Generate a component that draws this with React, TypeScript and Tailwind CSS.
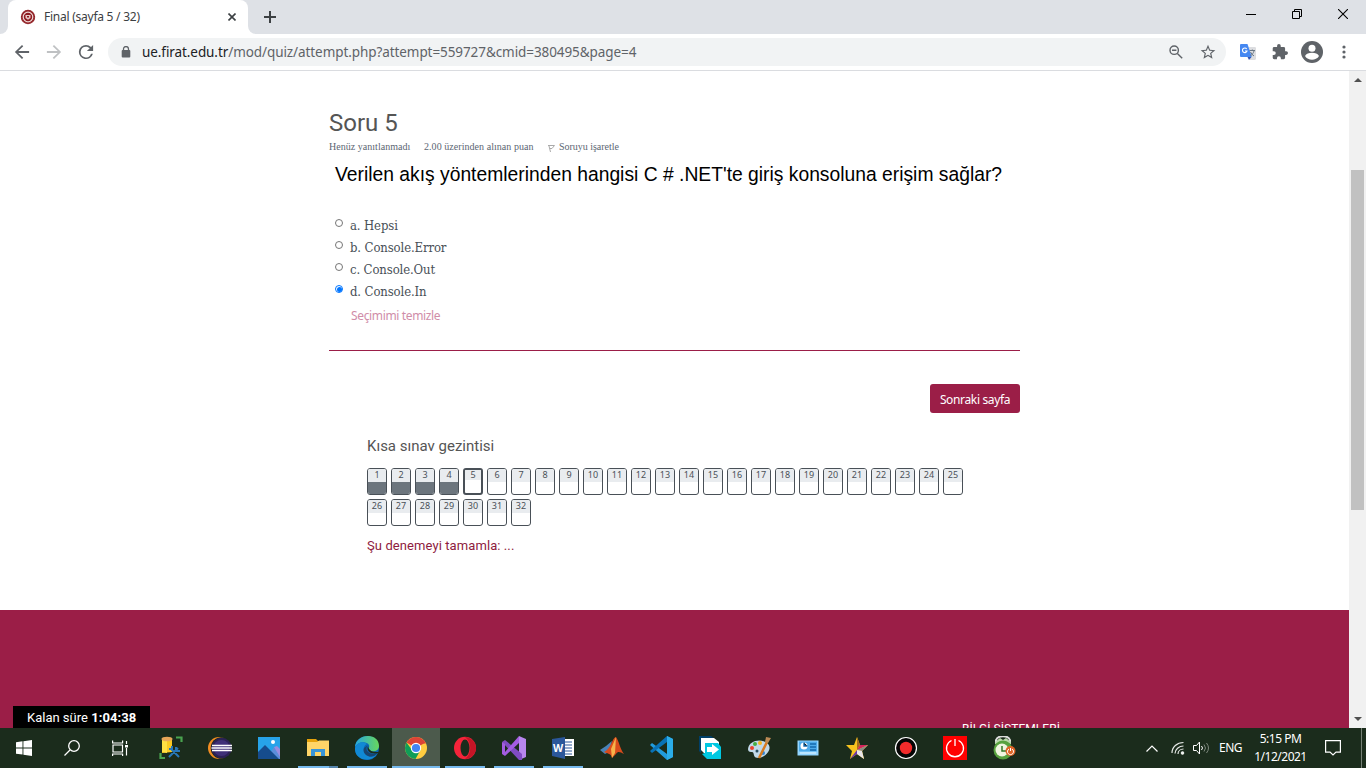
import React from "react";

const options = ["a. Hepsi", "b. Console.Error", "c. Console.Out", "d. Console.In"];

function TabStrip() {
  return (
    <div className="flex h-[34px] items-start bg-[#dee1e6] text-[#3c4043]">
      <div className="flex h-[34px] w-2 items-end bg-white">
        <div className="h-full w-full rounded-br-lg bg-[#dee1e6]" />
      </div>
      <div className="flex h-[34px] w-[240px] items-center rounded-t-lg bg-white pl-3">
        <svg width="16" height="16" viewBox="0 0 16 16">
          <circle cx="8" cy="8" r="7.2" fill="#8e1b20" />
          <circle cx="8" cy="8" r="4.8" fill="none" stroke="#eed9d8" strokeWidth="1.2" />
          <circle cx="8" cy="8" r="6.2" fill="none" stroke="#b76462" strokeWidth=".6" strokeDasharray="1 1" />
          <path d="M5.500 6h5v3L8 10.800 5.500 9z" fill="#e6c6c4" />
          <path d="M7 7h2v1.5H7z" fill="#8e1b20" />
        </svg>
        <span className="ml-2 w-[175px] whitespace-nowrap text-[12px] leading-4 tracking-[-0.25px]">Final (sayfa 5 / 32)</span>
        <svg className="ml-[9px]" width="8" height="8" viewBox="0 0 8 8" fill="none" stroke="#3c4043" strokeWidth="1.6">
          <path d="M.5.5l7 7M7.5.5l-7 7" />
        </svg>
      </div>
      <div className="h-[34px] w-2 bg-white">
        <div className="h-full w-full rounded-bl-lg bg-[#dee1e6]" />
      </div>
      <svg className="ml-2 mt-[11px]" width="12" height="12" viewBox="0 0 12 12" stroke="#3c4043" strokeWidth="2">
        <path d="M6 0v12M0 6h12" />
      </svg>
      <div className="ml-auto flex h-[34px] items-start pr-[18px] pt-[9px]">
        <svg className="mr-9" width="10" height="10" viewBox="0 0 10 10" stroke="#000"><path d="M0 5.5h10" /></svg>
        <svg className="mr-9" width="10" height="10" viewBox="0 0 10 10" fill="none" stroke="#000">
          <path d="M.5 2.5h7v7h-7zM2.5 2.5v-2h7v7h-2" />
        </svg>
        <svg width="10" height="10" viewBox="0 0 10 10" stroke="#000" strokeWidth="1.1"><path d="M0 0l10 10M10 0L0 10" /></svg>
      </div>
    </div>
  );
}

function Toolbar() {
  return (
    <div className="flex h-[37px] items-center border-b border-[#dadce0] bg-white pl-[14px]">
      <svg width="16" height="16" viewBox="3 3 18 18" fill="#5f6368"><path d="M20 11H7.83l5.59-5.59L12 4l-8 8 8 8 1.41-1.41L7.83 13H20v-2z" /></svg>
      <svg className="ml-4" width="16" height="16" viewBox="3 3 18 18" fill="#bfc1c3"><path d="M12 4l-1.41 1.41L16.17 11H4v2h12.17l-5.58 5.59L12 20l8-8z" /></svg>
      <svg className="ml-4" width="16" height="16" viewBox="3 3 18 18" fill="#5f6368">
        <path d="M17.65 6.35A7.96 7.96 0 0 0 12 4a8 8 0 1 0 7.73 10h-2.08A6 6 0 1 1 12 6c1.66 0 3.14.69 4.22 1.78L13 11h7V4z" />
      </svg>
      <div className="ml-[14px] flex h-7 w-[1118px] items-center rounded-full bg-[#f1f3f4] pl-[13px]">
        <svg width="10" height="12" viewBox="0 0 10 12"><rect x=".7" y="4" width="8.6" height="7.6" rx="1" fill="#5f6368" /><path d="M2.5 5V3a2.5 2.5 0 0 1 5 0v2" fill="none" stroke="#5f6368" strokeWidth="1.3" /></svg>
        <span className="ml-[11px] w-[1025px] whitespace-nowrap text-[13.5px] leading-5 tracking-[-0.08px] text-[#5f6368]">
          <span className="text-[#202124]">ue.firat.edu.tr</span>/mod/quiz/attempt.php?attempt=559727&amp;cmid=380495&amp;page=4
        </span>
        <svg className="ml-[2px]" width="14" height="14" viewBox="0 0 14 14" fill="none" stroke="#5f6368" strokeWidth="1.4">
          <circle cx="5.2" cy="5.2" r="4.2" /><path d="M8.4 8.4l4.8 4.8M3 5.2h4.4" />
        </svg>
        <svg className="ml-[17px]" width="16" height="16" viewBox="0 0 24 24" fill="#5f6368"><path d="M23 9.200l-7.900-.7L12 1.200 8.900 8.500 1 9.200l6 5.200-1.800 7.700 6.800-4.100 6.800 4.100-1.800-7.700zM12 16l-4.200 2.500 1.100-4.700-3.700-3.200 4.900-.4L12 5.700l1.900 4.500 4.900.4-3.700 3.200 1.100 4.700z" /></svg>
      </div>
      <svg className="ml-[14px]" width="16" height="16" viewBox="0 0 16 16">
        <path d="M7 3h8.300l.7.7V15l-1 1H10z" fill="#dcdde0" /><path d="M7.500 13h4L9 16z" fill="#3456b4" />
        <path d="M1 0h6.500l4.300 13H1a1 1 0 0 1-1-1V1a1 1 0 0 1 1-1z" fill="#4688f1" />
        <path d="M6.700 5A2.300 2.300 0 1 0 7 7H5" fill="none" stroke="#fff" strokeWidth="1.100" />
        <path d="M9.500 6.500h5.500M12.300 5.500v1M14 7c-.5 2-2 3.500-3.500 5M10.500 8c.7 1.700 2 3 3.500 4" fill="none" stroke="#687786" />
      </svg>
      <svg className="ml-4" width="16" height="16" viewBox="1 1 22 22" fill="#5f6368"><path d="M20.500 11H19V7a2 2 0 0 0-2-2h-4V3.500a2.500 2.500 0 0 0-5 0V5H4a2 2 0 0 0-2 2v3.800h1.500a2.700 2.700 0 0 1 0 5.400H2V20a2 2 0 0 0 2 2h3.800v-1.500a2.700 2.700 0 0 1 5.400 0V22H17a2 2 0 0 0 2-2v-4h1.500a2.500 2.500 0 0 0 0-5z" /></svg>
      <svg className="ml-[13px]" width="22" height="22" viewBox="0 0 22 22"><circle cx="11" cy="11" r="11" fill="#5f6368" /><circle cx="11" cy="7.200" r="3.500" fill="#fff" /><path d="M4 15c2-4.200 12-4.200 14 0-3 5-11 5-14 0z" fill="#fff" /></svg>
      <svg className="ml-[19px]" width="4" height="14" viewBox="0 0 4 14" fill="#5f6368"><circle cx="2" cy="2" r="1.600" /><circle cx="2" cy="7" r="1.600" /><circle cx="2" cy="12" r="1.600" /></svg>
    </div>
  );
}

function QuizButton({ n }: { n: number }) {
  const current = n === 5;
  const answered = n < 5;
  return (
    <div className={`flex h-[27px] w-5 flex-col overflow-hidden rounded-[3px] border-[#495057] bg-white ${current ? "border-2" : "border"}`}>
      <div className={`bg-[#e9ecef] text-center text-[9px] text-[#495057] ${current ? "h-[10px] leading-[9px]" : "h-[13px] leading-[11px]"}`}>{n}</div>
      {answered && <div className="flex-1 bg-[#6c757d]" />}
    </div>
  );
}

function Question() {
  return (
    <main className="ml-[329px] flex h-[539px] w-[691px] flex-col">
      <h1 className="mt-9 h-8 whitespace-nowrap font-['Roboto'] text-[24px] leading-8 text-[#555]">Soru 5</h1>
      <div className="mt-[1px] flex h-[14px] items-center whitespace-nowrap font-['Liberation_Serif'] text-[10px] leading-[14px] text-[#5b6673]">
        <span className="w-[95px] tracking-[0.03px]">Henüz yanıtlanmadı</span>
        <span className="w-[124px] tracking-[0.05px]">2.00 üzerinden alınan puan</span>
        <svg className="mt-[2px]" width="7" height="8" viewBox="0 0 7 8" fill="none" stroke="#aaa"><path d="M0 1.500h6.500L4 4.500H2M1 2l1.500 6" /></svg>
        <span className="ml-1 tracking-[-0.03px]">Soruyu işaretle</span>
      </div>
      <p className="ml-[6px] mt-[7px] h-7 whitespace-nowrap font-['Liberation_Sans'] text-[19.3px] leading-7 text-black">
        Verilen akış yöntemlerinden hangisi C # .NET'te giriş konsoluna erişim sağlar?
      </p>
      <div className="ml-[6px] mt-[25px] flex flex-col">
        {options.map((o, i) => (
          <div key={o} className="flex h-[22px] items-start">
            <span className={`mt-[5px] flex h-2 w-2 items-center justify-center rounded-full border ${i === 3 ? "border-[#0075ff]" : "border-[#767676]"}`}>
              {i === 3 && <span className="h-[5px] w-[5px] shrink-0 rounded-full bg-[#0075ff]" />}
            </span>
            <span className="ml-[7px] mt-px whitespace-nowrap font-['DejaVu_Serif_Condensed','DejaVu_Serif'] text-[13px] leading-[22px] tracking-[-0.12px] text-[#495057]">{o}</span>
          </div>
        ))}
      </div>
      <a className="ml-[22px] mt-1 h-5 whitespace-nowrap text-[12px] leading-5 tracking-[-0.35px] text-[#d08da8]">Seçimimi temizle</a>
      <div className="mt-6 border-t border-[#9b1e47]" />
      <div className="mt-[33px] flex justify-end">
        <button className="h-[29px] w-[90px] whitespace-nowrap rounded-[3px] bg-[#9b1e47] pt-[3px] text-[12px] leading-4 tracking-[-0.35px] text-white">Sonraki sayfa</button>
      </div>
      <section className="ml-[38px] mt-[21px]">
        <h2 className="h-6 font-['Roboto'] text-[15px] leading-6 text-[#555]">Kısa sınav gezintisi</h2>
        <div className="mt-[10px] flex w-[600px] flex-wrap gap-1">
          {Array.from({ length: 32 }, (_, i) => <QuizButton key={i} n={i + 1} />)}
        </div>
        <a className="mt-[10px] block font-['Roboto'] text-[13px] leading-5 tracking-[0.09px] text-[#8e1b40]">Şu denemeyi tamamla: ...</a>
      </section>
    </main>
  );
}

const appIcons: { bar: string; art: React.ReactNode }[] = [
  { bar: "", art: <><path d="M3 2v15l10-1V2z" fill="#f9c922" /><path d="M3 3v13l5 1V3z" fill="#ffe044" /><ellipse cx="8" cy="3" rx="5.500" ry="2.300" fill="#e8a658" /><path d="M17 1.500h5.500V6M1.500 17v5H6" fill="none" stroke="#4aa34f" strokeWidth="2.200" /><path d="M10 21l9-9M12 13l8 8M10 13h3v-3M17 11v4h4" stroke="#2878ba" strokeWidth="2" fill="none" /></> },
  { bar: "", art: <><circle cx="11" cy="12" r="11" fill="#f38e22" /><circle cx="13.500" cy="12" r="10.800" fill="#1b2c1c" /><circle cx="13.500" cy="12" r="10.300" fill="#2c2255" /><circle cx="13.500" cy="12" r="8" fill="#3f3078" /><path d="M4 9.500h20M3.500 12h20.500M4 14.500h20" stroke="#fff" strokeWidth="1.300" /></> },
  { bar: "", art: <><path d="M1 1h22v22H1z" fill="#27a3e9" /><path d="M9 23l8-12 6 7v5z" fill="#5b8edb" /><path d="M17 11l3-1 3 3v8z" fill="#9a8de0" /><path d="M1 16l7-7 14 14H1z" fill="#164c8d" /><circle cx="16" cy="6" r="2" fill="#fff" /></> },
  { bar: "split", art: <><path d="M1 3h9l2 2h11v3H1z" fill="#e6a20b" /><path d="M1 6h10l2-1.500h10V20H1z" fill="#ffd568" /><path d="M5 20v-7h14v7h-4v-4H9v4z" fill="#3895d8" /></> },
  { bar: "run", art: <><defs><linearGradient id="edge"><stop stopColor="#27a7df" /><stop offset="1" stopColor="#68d85b" /></linearGradient></defs><circle cx="12" cy="12" r="12" fill="#0c67b5" /><path d="M0 11C1-3 24-4 24 10c0 5-6 7-10 4-2-2 1-2 0-5C12 5 3 5 0 11z" fill="url(#edge)" /><path d="M0 12C2 6 8 5 12 8c-5 2-4 9 1 12 4 2 7 0 9-2-5 9-23 7-22-6z" fill="#1189d4" /><path d="M13 9c-3 3-2 8 5 9 3 0 4-1 5-2-5 9-17 3-14-4z" fill="#19456f" /><path d="M13 10c1 5 4 6 11 6l-1 1c-7 2-12-2-10-7z" fill="#1b2c1c" /></> },
  { bar: "active", art: <><circle cx="12" cy="12" r="11" fill="#ffcd40" /><path d="M12 12L2.500 6.500A11 11 0 0 1 21.500 6.500z" fill="#db4437" /><path d="M2.500 6.500A11 11 0 0 0 11.500 23L16.500 14 8 14z" fill="#0f9d58" /><path d="M12 7h9.800" stroke="#db4437" /><circle cx="12" cy="12" r="5.200" fill="#fff" /><circle cx="12" cy="12" r="4.100" fill="#4285f4" /></> },
  { bar: "run", art: <><ellipse cx="12" cy="12" rx="11" ry="11.200" fill="#f5243a" /><path d="M12 1c6 0 11 5 11 11s-5 11-11 11c7-5 7-17 0-22z" fill="#c51526" /><ellipse cx="12" cy="12" rx="4.500" ry="8.500" fill="#1b2c1c" /></> },
  { bar: "run", art: <><path d="M17 0l7 3v18l-7 3z" fill="#b886ee" /><path d="M0 6l3-2 17 14v6h-3z" fill="#804bc2" /><path d="M0 18V6l3 2v8l14-16v7L3 20z" fill="#a45ce2" /></> },
  { bar: "run", art: <><path d="M12 3h11v17H12z" fill="#fff" /><path d="M14 6h7M14 9h7M14 12h7M14 15h7M14 18h7" stroke="#2b579a" /><path d="M1 3l13-2v22L1 20z" fill="#2b579a" /><text x="2" y="16" fontSize="10.500" fontWeight="bold" fill="#fff">W</text></> },
  { bar: "", art: <><path d="M0 14l6-4 6-5-3 11-4 2z" fill="#4a83b8" /><path d="M4 16C11 13 12 2 16 1c3 4 4 12 8 17-4-2-6-3-8 0l-4 4c-1-5-4-4-8-6z" fill="#d84b1c" /><path d="M11 13L16 1l-1 16-3 5z" fill="#f6b44b" /></> },
  { bar: "", art: <><path d="M18 0l6 3v18l-6 3L1 9l2-2 15 11z" fill="#219bdd" /><path d="M1 15L18 0v6L3 17z" fill="#0872b6" /><path d="M18 0l6 3v18l-6 3z" fill="#2bade9" /></> },
  { bar: "", art: <><path d="M1 0h12l3 2H3v15l-2-2z" fill="#003f68" /><path d="M3 2h13l5 4v11H6l-3-3z" fill="#fff" /><path d="M7 7h13l3 4v12H9l-5-5 3-1z" fill="#00c8e2" /><path d="M9 11h5V8l7 5.500-7 5.500v-3H9z" fill="#fff" /></> },
  { bar: "", art: <><path d="M1 13C2 4 15 2 21 8c4 4 0 12-9 14-8 0-3-7-8-6-2 0-3-1-3-3z" fill="#c1d8e9" /><circle cx="5" cy="12" r="2" fill="#ed4030" /><circle cx="8" cy="8" r="2" fill="#44ad44" /><circle cx="13" cy="7" r="2" fill="#f7b31c" /><circle cx="16" cy="17" r="2" fill="#3185d5" /><circle cx="10" cy="15" r="1.500" fill="#294d60" /><path d="M12 22L20 6" stroke="#d87b20" strokeWidth="2.500" /><path d="M18 6l1-5 5 1-3 5z" fill="#bd8a55" /></> },
  { bar: "", art: <><path d="M1.500 4.500h21v15h-21z" fill="#93d5ff" /><path d="M3 5.500h18v10H3z" fill="#4dabea" /><circle cx="8" cy="10" r="3.500" fill="#fff" /><path d="M8 6.500V10h3.500M14 8h6M14 11h6M14 14h6" stroke="#156aad" strokeWidth="1.400" /><path d="M4 17h16" stroke="#e4f6ff" /></> },
  { bar: "", art: <><path d="M12 1l3 8h8l-6 6 2 8-7-5-7 5 2-8-6-6h8z" fill="#f7c31d" /><path d="M12 1v13l3-5z" fill="#a56e20" /><path d="M15 9h8l-11 5z" fill="#d6245e" /><path d="M12 14l11-5-6 6z" fill="#888" /><path d="M12 14v4l7 5-2-8z" fill="#e8e5e8" /><path d="M12 14L5 23l7-5z" fill="#6a33aa" /></> },
  { bar: "", art: <><circle cx="12" cy="12" r="10.500" fill="#050505" stroke="#fff" strokeWidth="1.200" /><circle cx="12" cy="12" r="6.200" fill="#f22b2b" /></> },
  { bar: "", art: <><path d="M0 0h24v24H0z" fill="#f00" /><path d="M8.500 4.500a8.500 8.500 0 1 0 7 0M12 3v7" stroke="#fff" strokeWidth="1.300" fill="none" /></> },
  { bar: "", art: <><path d="M4 8V4c2-5 12-5 14 0v4" stroke="#ddd" strokeWidth="2" fill="none" /><path d="M3 6l5-4 3 2 3-2 5 4-1 3H4z" fill="#b9d8aa" /><circle cx="11" cy="14" r="9.500" fill="#57a23e" /><circle cx="10" cy="14" r="6.500" fill="#eff5df" /><path d="M10 10v5h4" stroke="#357827" strokeWidth="1.500" fill="none" /><circle cx="18.500" cy="15" r="5" fill="#df6527" /><path d="M17 13a3 3 0 1 0 3 0M18.500 12v3" stroke="#fff" fill="none" /></> },
];

function Taskbar() {
  return (
    <div className="flex h-10 items-stretch bg-[#1b2c1c] text-white">
      <div className="flex w-[147px] items-center">
        <svg className="ml-4" width="16" height="16" viewBox="0 0 16 16" fill="#fff"><path d="M0 2.300L6.500 1.300v6.200H0zM7.400 1.200L16 0v7.500H7.400zM0 8.400h6.500v6.200L0 13.700zM7.400 8.400H16V16l-8.600-1.200z" /></svg>
        <svg className="ml-8" width="16" height="16" viewBox="0 0 16 16" fill="none" stroke="#fff" strokeWidth="1.300"><circle cx="10" cy="6" r="5.300" /><path d="M6 10L.5 15.500" /></svg>
        <svg className="ml-8" width="16" height="16" viewBox="0 0 16 16" fill="none" stroke="#fff" strokeWidth="1.200"><path d="M.6.500V3h10V.500M1 5h9.500v7H1zM.6 16v-2h10v2M14.500 1v3M14.500 8v7.500" /><path d="M13 5h3v2.500h-3z" fill="#fff" stroke="none" /></svg>
      </div>
      <div className="flex gap-px">
        {appIcons.map((app, i) => (
          <div key={i} className={`flex h-10 w-12 flex-col items-center ${app.bar === "active" ? "bg-[#4c5a4c]" : ""}`}>
            <svg className="mt-2" width="24" height="24" viewBox="0 0 24 24">{app.art}</svg>
            {app.bar !== "" && (
              <div className={`mt-[6px] flex h-[2px] justify-end bg-[#76b9ed] ${app.bar === "active" ? "w-12" : "w-10"}`}>
                {app.bar === "split" && <div className="w-[9px] bg-[#5685ad]" />}
              </div>
            )}
          </div>
        ))}
      </div>
      <div className="ml-auto flex items-center">
        <svg width="12" height="7" viewBox="0 0 12 7" fill="none" stroke="#fff" strokeWidth="1.200"><path d="M.5 6.500L6 1l5.500 5.500" /></svg>
        <svg className="ml-[13px]" width="14" height="14" viewBox="0 0 14 14" fill="none" stroke="#e6e9e6" strokeWidth="1.200"><path d="M1 12C1 6 6 1.500 12.500 1.500M4 12.500c0-4 4-7.500 8.500-7.500M7 13c0-3 2.500-5 5.500-5" /><circle cx="11.500" cy="12" r="1.200" fill="#fff" /></svg>
        <svg className="ml-2" width="17" height="14" viewBox="0 0 17 14" fill="none" stroke="#fff"><path d="M.5 4.500h3L6.500 1v12l-3-3.500h-3zM8.500 5q2 2 0 4" /><path d="M11 3.500q3 3.500 0 7M13.500 2q4 5 0 10" stroke="#7e897e" /></svg>
        <span className="ml-[9px] w-[23px] whitespace-nowrap text-[12px] tracking-[-0.5px]">ENG</span>
        <div className="ml-3 flex w-[53px] flex-col items-center whitespace-nowrap text-[12px] leading-[18px] tracking-[-0.5px]"><span>5:15 PM</span><span>1/12/2021</span></div>
        <svg className="ml-[18px]" width="16" height="16" viewBox="0 0 16 16" fill="none" stroke="#fff" strokeWidth="1.200"><path d="M.6.600h14.800v11.500H11L8 15l-3-2.900H.6z" /></svg>
        <div className="ml-5 mr-1 h-10 w-px bg-[#758075]" />
      </div>
    </div>
  );
}

export default function App() {
  return (
    <div className="relative flex h-[768px] w-[1366px] flex-col overflow-hidden bg-white font-['Noto_Sans','Open_Sans',sans-serif]">
      <TabStrip />
      <Toolbar />
      <div className="flex h-[657px]">
        <div className="flex w-[1349px] flex-col overflow-hidden">
          <Question />
          <footer className="h-[118px] overflow-hidden bg-[#9b1e47] pl-[962px] pt-[111px]">
            <div className="whitespace-nowrap font-['Roboto'] text-[12px] leading-4 tracking-[0.05px] text-white">BİLGİ SİSTEMLERİ</div>
          </footer>
        </div>
        <div className="flex w-[17px] flex-col items-center bg-[#f1f1f1] py-[7px]">
          <svg width="8" height="4" viewBox="0 0 8 4" fill="#505050"><path d="M0 4l4-4 4 4z" /></svg>
          <div className="mt-[88px] h-[340px] w-[13px] bg-[#c1c1c1]" />
          <svg className="mt-auto" width="8" height="4" viewBox="0 0 8 4" fill="#505050"><path d="M0 0l4 4 4-4z" /></svg>
        </div>
      </div>
      <Taskbar />
      <div className="absolute left-[13px] top-[706px] h-[22px] w-[137px] whitespace-nowrap bg-black pl-[14px] font-['Roboto'] text-[13px] leading-[23px] text-white">
        Kalan süre <b className="tracking-[0.08px]">1:04:38</b>
      </div>
    </div>
  );
}
